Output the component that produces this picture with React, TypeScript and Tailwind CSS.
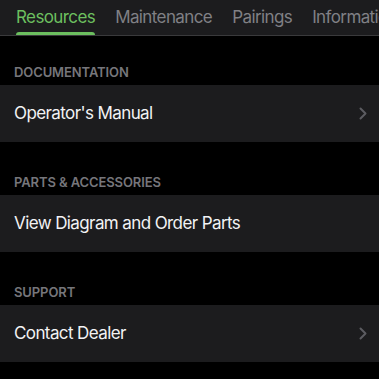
const TABS = ["Resources", "Maintenance", "Pairings", "Information"];

const SECTIONS = [
  { title: "DOCUMENTATION", item: "Operator's Manual", chevron: true },
  { title: "PARTS & ACCESSORIES", item: "View Diagram and Order Parts", chevron: false },
  { title: "SUPPORT", item: "Contact Dealer", chevron: true },
];

function Chevron() {
  return (
    <svg width="8" height="13" viewBox="0 0 8 13" fill="none" aria-hidden>
      <path
        d="M1.5 1.5 6.5 6.5 1.5 11.5"
        stroke="#5c5c61"
        strokeWidth="2"
        strokeLinecap="round"
        strokeLinejoin="round"
      />
    </svg>
  );
}

export default function App() {
  return (
    <div
      className="h-[379px] w-[379px] overflow-hidden bg-black antialiased"
      style={{ fontFamily: "Inter, 'Noto Sans', sans-serif" }}
    >
      <nav className="flex h-[36px] gap-[20px] overflow-hidden whitespace-nowrap border-b border-[#3a3a3c] bg-[#1c1c1e] pl-[16px]">
        {TABS.map((tab, i) => (
          <div key={tab} className="relative flex shrink-0 items-start pt-[6px]">
            <span
              className={
                "text-[17px] leading-[22px] tracking-[-0.6px] " +
                (i === 0 ? "text-[#6cbf5f]" : "text-[#808085]")
              }
            >
              {tab}
            </span>
            {i === 0 && (
              <span className="absolute bottom-0 left-0 right-0 h-[3px] rounded-t-sm bg-[#6cbf5f]" />
            )}
          </div>
        ))}
      </nav>

      {SECTIONS.map((s, i) => (
        <section key={s.title}>
          <h2
            className={
              "px-[14px] pb-[5px] text-[13px] font-semibold leading-[16px] tracking-[-0.1px] text-[#76767b] " +
              (i === 0 ? "pt-[28px]" : "pt-[32px]")
            }
          >
            {s.title}
          </h2>
          <div className="flex h-[57px] items-center justify-between bg-[#1c1c1e] pl-[14px] pr-[12px]">
            <span className="text-[17px] tracking-[-0.6px] text-[#f2f2f4]">{s.item}</span>
            {s.chevron && <Chevron />}
          </div>
        </section>
      ))}
    </div>
  );
}
